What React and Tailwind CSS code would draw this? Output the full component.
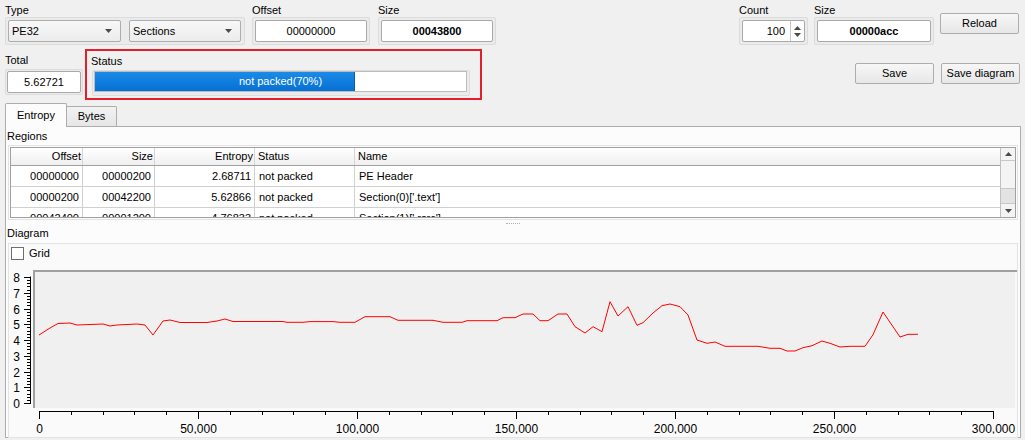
import React from 'react';

const curve = [
  [39, 335], [50, 328], [58, 323.5], [70, 323], [77, 325], [103, 324], [110, 326], [117, 325], [137, 324], [145, 325],
  [153, 335], [163, 321], [170, 320], [180, 322.5], [207, 322.5], [217, 321], [225, 319], [233, 321.5], [257, 321.5],
  [283, 321.5], [287, 322.3], [303, 322.3], [310, 321.6], [333, 321.6], [340, 322.3], [355, 322.3], [365, 316.7],
  [390, 316.7], [398, 320.3], [433, 320.3], [443, 322.3], [462, 322.3], [467, 320.7], [497, 320.7], [503, 317.7],
  [515, 317.7], [523, 314], [533, 314], [540, 320.7], [548, 320.7], [558, 314], [567, 314], [575, 326.7], [585, 333],
  [593, 326.7], [602, 331.7], [610, 301.7], [618, 316], [628, 306.7], [637, 325.3], [643, 322.7], [653, 313],
  [662, 305.7], [670, 304], [680, 306.7], [688, 315], [697, 340], [707, 343.3], [715, 342], [725, 346.3], [758, 346.3],
  [770, 348.3], [780, 348.3], [787, 351], [795, 351], [803, 347.7], [812, 345.7], [822, 341], [830, 343.3], [840, 347],
  [850, 346.3], [865, 346.3], [873, 334.7], [883, 312], [900, 337], [908, 334.3], [918, 334.3],
];

const rows = [
  ['00000000', '00000200', '2.68711', 'not packed', 'PE Header'],
  ['00000200', '00042200', '5.62866', 'not packed', "Section(0)['.text']"],
  ['00042400', '00001200', '4.76833', 'not packed', "Section(1)['.rsrc']"],
];

function Label({ children, className = '' }) {
  return <div className={`h-[14px] leading-[14px] whitespace-nowrap ${className}`}>{children}</div>;
}

function Frame({ children, className = '' }) {
  return (
    <div className={`border border-[#dcdcdc] bg-[#ebebeb] rounded-[2px] p-[2px] ${className}`}>{children}</div>
  );
}

function Edit({ children, bold }) {
  return (
    <div
      className={`h-[22px] bg-white border border-[#a9a9a9] rounded-[2px] flex items-center justify-center ${
        bold ? 'font-bold' : ''
      }`}
    >
      {children}
    </div>
  );
}

function Arrow({ up, className = '' }) {
  return (
    <svg width="7" height="4" viewBox="0 0 7 4" className={className}>
      <path d={up ? 'M0 4 L3.5 0 L7 4 Z' : 'M0 0 L7 0 L3.5 4 Z'} fill="#4a4a4a" />
    </svg>
  );
}

function Combo({ text, className }) {
  return (
    <div
      className={`h-[22px] flex items-center justify-between border border-[#adadad] rounded-[2px] bg-linear-to-b from-[#f8f8f8] to-[#ececec] pl-[3px] pr-[8px] ${className}`}
    >
      <span>{text}</span>
      <Arrow />
    </div>
  );
}

function Button({ children, className = '' }) {
  return (
    <div
      className={`w-[79px] h-[21px] flex items-center justify-center border border-[#adadad] rounded-[2px] bg-linear-to-b from-[#f7f7f7] to-[#e7e7e7] whitespace-nowrap ${className}`}
    >
      {children}
    </div>
  );
}

function Chart() {
  const xs = [0, 1, 2, 3, 4, 5, 6].map((i) => 39 + 159 * i);
  const xLabels = ['0', '50,000', '100,000', '150,000', '200,000', '250,000', '300,000'];
  const xMinor = [];
  for (let i = 0; i <= 30; i++) if (i % 5) xMinor.push(39 + 31.8 * i);
  const yMinor = [];
  for (let i = 0; i <= 40; i++) if (i % 5) yMinor.push(403 - 3.15 * i);

  return (
    <svg width="1008" height="172" viewBox="9 262 1008 172" className="block">
      <rect x="35" y="272" width="980" height="136" fill="#f0f0f0" />
      <rect x="33" y="270" width="984" height="2" fill="#a0a0a0" />
      <rect x="33" y="270" width="2" height="138" fill="#a0a0a0" />

      <line x1="30.5" y1="276.5" x2="30.5" y2="403.5" stroke="#000" />
      {[0, 1, 2, 3, 4, 5, 6, 7, 8].map((i) => {
        const y = Math.round(403 - 15.75 * i) + 0.5;
        return (
          <g key={i}>
            <line x1="24" y1={y} x2="31" y2={y} stroke="#000" />
            <text x="20" y={y + 4.5} textAnchor="end" fontSize="12" fill="#000">
              {i}
            </text>
          </g>
        );
      })}
      {yMinor.map((y, i) => (
        <line key={i} x1="27" y1={Math.round(y) + 0.5} x2="31" y2={Math.round(y) + 0.5} stroke="#000" />
      ))}

      <line x1="39" y1="411.5" x2="993" y2="411.5" stroke="#000" />
      {xs.map((x, i) => (
        <g key={i}>
          <line x1={x + 0.5} y1="411" x2={x + 0.5} y2="419" stroke="#000" />
          <text x={x + 0.5} y="433" textAnchor="middle" fontSize="12" fill="#000">
            {xLabels[i]}
          </text>
        </g>
      ))}
      {xMinor.map((x, i) => (
        <line key={i} x1={Math.round(x) + 0.5} y1="411" x2={Math.round(x) + 0.5} y2="415" stroke="#000" />
      ))}

      <polyline points={curve.map((p) => p.join(',')).join(' ')} fill="none" stroke="#ff0000" strokeWidth="1" />
    </svg>
  );
}

export default function App() {
  return (
    <div className="w-[1025px] h-[440px] overflow-hidden bg-[#f0f0f0] text-[11px] text-black font-['Liberation_Sans',Arial,sans-serif]">
      {/* row 1 */}
      <div className="flex pt-[3px] h-[45px]">
        <div className="ml-[5px] w-[240px]">
          <Label>Type</Label>
          <Frame className="flex gap-[8px]">
            <Combo text="PE32" className="w-[113px]" />
            <Combo text="Sections" className="w-[112px]" />
          </Frame>
        </div>
        <div className="ml-[7px] w-[118px]">
          <Label>Offset</Label>
          <Frame>
            <Edit>00000000</Edit>
          </Frame>
        </div>
        <div className="ml-[8px] w-[118px]">
          <Label>Size</Label>
          <Frame>
            <Edit bold>00043800</Edit>
          </Frame>
        </div>
        <div className="ml-[243px] w-[69px]">
          <Label>Count</Label>
          <Frame>
            <div className="h-[22px] bg-white border border-[#a9a9a9] rounded-[2px] flex">
              <div className="flex-1 flex items-center justify-end pr-[5px]">100</div>
              <div className="w-[14px] border-l border-[#c8c8c8] flex flex-col items-center justify-center gap-[3px]">
                <Arrow up />
                <Arrow />
              </div>
            </div>
          </Frame>
        </div>
        <div className="ml-[6px] w-[120px]">
          <Label>Size</Label>
          <Frame>
            <Edit bold>00000acc</Edit>
          </Frame>
        </div>
        <Button className="ml-[6px] mt-[10px]">Reload</Button>
      </div>

      {/* row 2 */}
      <div className="flex mt-[4px] h-[51px]">
        <div className="ml-[5px] w-[78px] pt-[4px]">
          <Label>Total</Label>
          <Frame className="mt-[2px] p-px">
            <Edit>5.62721</Edit>
          </Frame>
        </div>
        <div className="ml-[2px] w-[397px] h-[51px] border-2 border-[#e3202a] pl-[4px] pt-[3px]">
          <Label>Status</Label>
          <div className="ml-px mt-[2px] w-[378px] h-[26px] border border-[#dcdcdc] bg-[#ebebeb] rounded-[2px] pl-px pr-[2px] pb-[3px]">
            <div className="relative h-[21px] bg-white border border-[#bcbcbc]">
              <div className="absolute left-0 top-0 bottom-0 w-[70%] bg-linear-to-b from-[#1a8be8] to-[#0670d4] border-r border-[#0a5cae]" />
              <div className="absolute inset-0 flex items-center justify-center text-white">not packed(70%)</div>
            </div>
          </div>
        </div>
        <Button className="ml-[373px] mt-[14px]">Save</Button>
        <Button className="ml-[7px] mt-[14px]">Save diagram</Button>
      </div>

      {/* tabs */}
      <div className="flex items-end ml-[5px] h-[26px]">
        <div className="relative z-10 -mb-px w-[62px] h-[24px] flex items-center justify-center border border-b-0 border-[#adadad] rounded-t-[2px] bg-[#fcfcfc]">
          Entropy
        </div>
        <div className="w-[50px] h-[20px] flex items-center justify-center border border-l-0 border-b-0 border-[#adadad] rounded-tr-[2px] bg-linear-to-b from-[#f2f2f2] to-[#e6e6e6]">
          Bytes
        </div>
      </div>

      <div className="ml-[5px] w-[1016px] h-[312px] border border-[#adadad] bg-[#fcfcfc]">
        <Label className="mt-[2px] ml-px">Regions</Label>
        <div className="mt-[2px] ml-[2px] w-[1010px] border border-[#e3e3e3] p-px">
          <div className="h-[71px] border border-[#a0a0a0] bg-white flex">
            <div className="flex-1 flex flex-col overflow-hidden">
              <div className="h-[18px] shrink-0 flex border-b border-[#a0a0a0] bg-linear-to-b from-[#ffffff] to-[#efefef]">
                <div className="w-[72px] border-r border-[#d5d5d5] flex items-center justify-end pr-px">Offset</div>
                <div className="w-[72px] border-r border-[#d5d5d5] flex items-center justify-end pr-px">Size</div>
                <div className="w-[100px] border-r border-[#d5d5d5] flex items-center justify-end pr-px">Entropy</div>
                <div className="w-[100px] border-r border-[#d5d5d5] flex items-center pl-[3px]">Status</div>
                <div className="flex-1 flex items-center pl-[3px]">Name</div>
              </div>
              {rows.map((r, i) => (
                <div key={i} className="h-[21px] shrink-0 flex border-b border-[#d0d0d0]">
                  <div className="w-[72px] border-r border-[#d0d0d0] flex items-center justify-end pr-[3px]">{r[0]}</div>
                  <div className="w-[72px] border-r border-[#d0d0d0] flex items-center justify-end pr-[3px]">{r[1]}</div>
                  <div className="w-[100px] border-r border-[#d0d0d0] flex items-center justify-end pr-[3px]">{r[2]}</div>
                  <div className="w-[100px] border-r border-[#d0d0d0] flex items-center pl-[4px]">{r[3]}</div>
                  <div className="flex-1 flex items-center pl-[4px]">{r[4]}</div>
                </div>
              ))}
            </div>
            <div className="w-[15px] border-l border-[#c0c0c0] flex flex-col bg-[#f4f4f4]">
              <div className="h-[13px] border-b border-[#c8c8c8] flex items-center justify-center">
                <Arrow up />
              </div>
              <div className="h-[27px]" />
              <div className="h-[16px] bg-[#e3e3e3] border-y border-[#c8c8c8]" />
              <div className="flex-1 flex items-center justify-center">
                <Arrow />
              </div>
            </div>
          </div>
        </div>
        <div className="h-[6px] flex items-center justify-center">
          <div className="w-[14px] border-t border-dotted border-[#b0b0b0]" />
        </div>
        <Label className="ml-px">Diagram</Label>
        <div className="mt-[3px] ml-[2px] w-[1010px] h-[195px] border border-[#e3e3e3] bg-[#fafafa]">
          <div className="h-[18px] flex items-start">
            <div className="ml-[2px] mt-[3px] w-[13px] h-[13px] bg-white border border-[#6e6e6e]" />
            <span className="ml-[5px] mt-[2px] leading-[14px]">Grid</span>
          </div>
          <Chart />
        </div>
      </div>
    </div>
  );
}
